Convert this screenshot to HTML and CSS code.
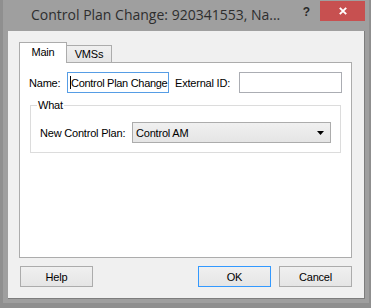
FILE: index.html
```html
<!DOCTYPE html>
<html>
<head>
<meta charset="utf-8">
<link rel="stylesheet" href="styles.css">
</head>
<body>
<div class="window">
  <div class="titlebar">
    <div class="title">Control Plan Change: 920341553, Na...</div>
    <div class="qmark">?</div>
    <div class="close">
      <svg width="8" height="8" viewBox="0 0 8 8"><path d="M0.8 0.8 L7.2 7.2 M7.2 0.8 L0.8 7.2" stroke="#fff" stroke-width="1.9" fill="none"/></svg>
    </div>
  </div>
  <div class="client">
    <div class="tabs">
      <div class="tab active">Main</div>
      <div class="tab">VMSs</div>
    </div>
    <div class="panel">
      <div class="row1">
        <span class="lbl lbl-name">Name:</span>
        <div class="input input-name focus"><span class="caret"></span><span class="input-text">Control Plan Change</span></div>
        <span class="lbl lbl-ext">External ID:</span>
        <div class="input input-ext"></div>
      </div>
      <div class="group">
        <span class="legend">What</span>
        <div class="row2">
          <span class="lbl lbl-plan">New Control Plan:</span>
          <div class="combo">
            <span class="combo-text">Control AM</span>
            <svg class="arrow" width="7" height="4" viewBox="0 0 7 4"><path d="M0 0 H7 L3.5 4 Z" fill="#000"/></svg>
          </div>
        </div>
      </div>
    </div>
    <div class="buttons">
      <div class="btn btn-help">Help</div>
      <div class="btn btn-ok">OK</div>
      <div class="btn btn-cancel">Cancel</div>
    </div>
  </div>
</div>
</body>
</html>
```
FILE: styles.css
```css
html, body {
  margin: 0;
  padding: 0;
}
body {
  width: 371px;
  height: 308px;
  overflow: hidden;
  background: #8f8f8f;
  font-family: "Liberation Sans", Arial, sans-serif;
  font-size: 11px;
  letter-spacing: -0.2px;
  color: #000;
}
.window {
  margin-left: 3px;
  width: 366px;
  height: 303px;
  box-sizing: border-box;
  background: #9f9f9f;
  padding: 0 4px 4px 5px;
}
.titlebar {
  height: 31px;
  display: flex;
  align-items: flex-start;
}
.title {
  margin-left: 23px;
  margin-top: 5px;
  font-family: "Open Sans", "Noto Sans", sans-serif;
  font-size: 14px;
  letter-spacing: 0;
  line-height: 20px;
  color: #2e2e2e;
  white-space: nowrap;
}
.qmark {
  margin-left: auto;
  margin-top: 5px;
  font-family: "Liberation Sans", Arial, sans-serif;
  font-weight: bold;
  font-size: 12px;
  line-height: 14px;
  color: #2a2a2a;
}
.close {
  margin-left: 10px;
  margin-top: 1px;
  width: 45px;
  height: 20px;
  background: #c75050;
  display: flex;
  align-items: center;
  justify-content: center;
}
.client {
  width: 357px;
  height: 268px;
  box-sizing: border-box;
  background: #f0f0f0;
  border-right: 1px solid #7d7d7d;
  border-bottom: 1px solid #7d7d7d;
  padding: 11px 12px 0 11px;
}
.tabs {
  display: flex;
  align-items: flex-end;
  height: 20px;
}
.tab {
  box-sizing: border-box;
  border: 1px solid #acacac;
  border-bottom: none;
  display: flex;
  align-items: center;
  justify-content: center;
}
.tab.active {
  width: 48px;
  height: 21px;
  margin-bottom: -1px;
  background: #fff;
  position: relative;
  z-index: 1;
  padding-bottom: 2px;
}
.tab:not(.active) {
  width: 46px;
  height: 17px;
  margin-left: -1px;
  background: linear-gradient(#f0f0f0, #e5e5e5);
}
.panel {
  width: 333px;
  height: 196px;
  box-sizing: border-box;
  border: 1px solid #acacac;
  background: #fff;
  padding: 9px 0 0 0;
}
.row1 {
  display: flex;
  align-items: center;
  height: 21px;
}
.lbl {
  white-space: nowrap;
}
.lbl-name {
  margin-left: 9px;
  width: 38px;
}
.lbl-ext {
  margin-left: 6px;
  width: 64px;
}
.input {
  box-sizing: border-box;
  height: 21px;
  border: 1px solid #abadb3;
  background: #fff;
  display: flex;
  align-items: center;
  white-space: nowrap;
}
.input.focus {
  border-color: #569de5;
}
.input-name {
  width: 102px;
  padding-left: 2px;
}
.input-text {
  letter-spacing: -0.3px;
}
.input-ext {
  width: 103px;
}
.caret {
  width: 1px;
  height: 13px;
  background: #000;
}
.group {
  position: relative;
  margin: 12px 0 0 10px;
  width: 311px;
  box-sizing: border-box;
  border: 1px solid #dcdcdc;
  padding: 16px 0 9px 0;
}
.legend {
  position: absolute;
  top: -7px;
  left: 6px;
  background: #fff;
  padding: 0 1px;
  line-height: 13px;
}
.row2 {
  display: flex;
  align-items: center;
}
.lbl-plan {
  margin-left: 9px;
  width: 92px;
}
.combo {
  box-sizing: border-box;
  width: 199px;
  height: 21px;
  border: 1px solid #acacac;
  background: linear-gradient(#f0f0f0, #e5e5e5);
  display: flex;
  align-items: center;
  padding: 0 6px 0 3px;
}
.combo-text {
  flex: 1;
}
.buttons {
  display: flex;
  margin-top: 8px;
}
.btn {
  box-sizing: border-box;
  width: 73px;
  height: 21px;
  border: 1px solid #acacac;
  background: linear-gradient(#f0f0f0, #e5e5e5);
  display: flex;
  align-items: center;
  justify-content: center;
}
.btn-help {
  margin-left: 1px;
}
.btn-ok {
  margin-left: auto;
  border-color: #3399ff;
}
.btn-cancel {
  margin-left: 8px;
}
```
